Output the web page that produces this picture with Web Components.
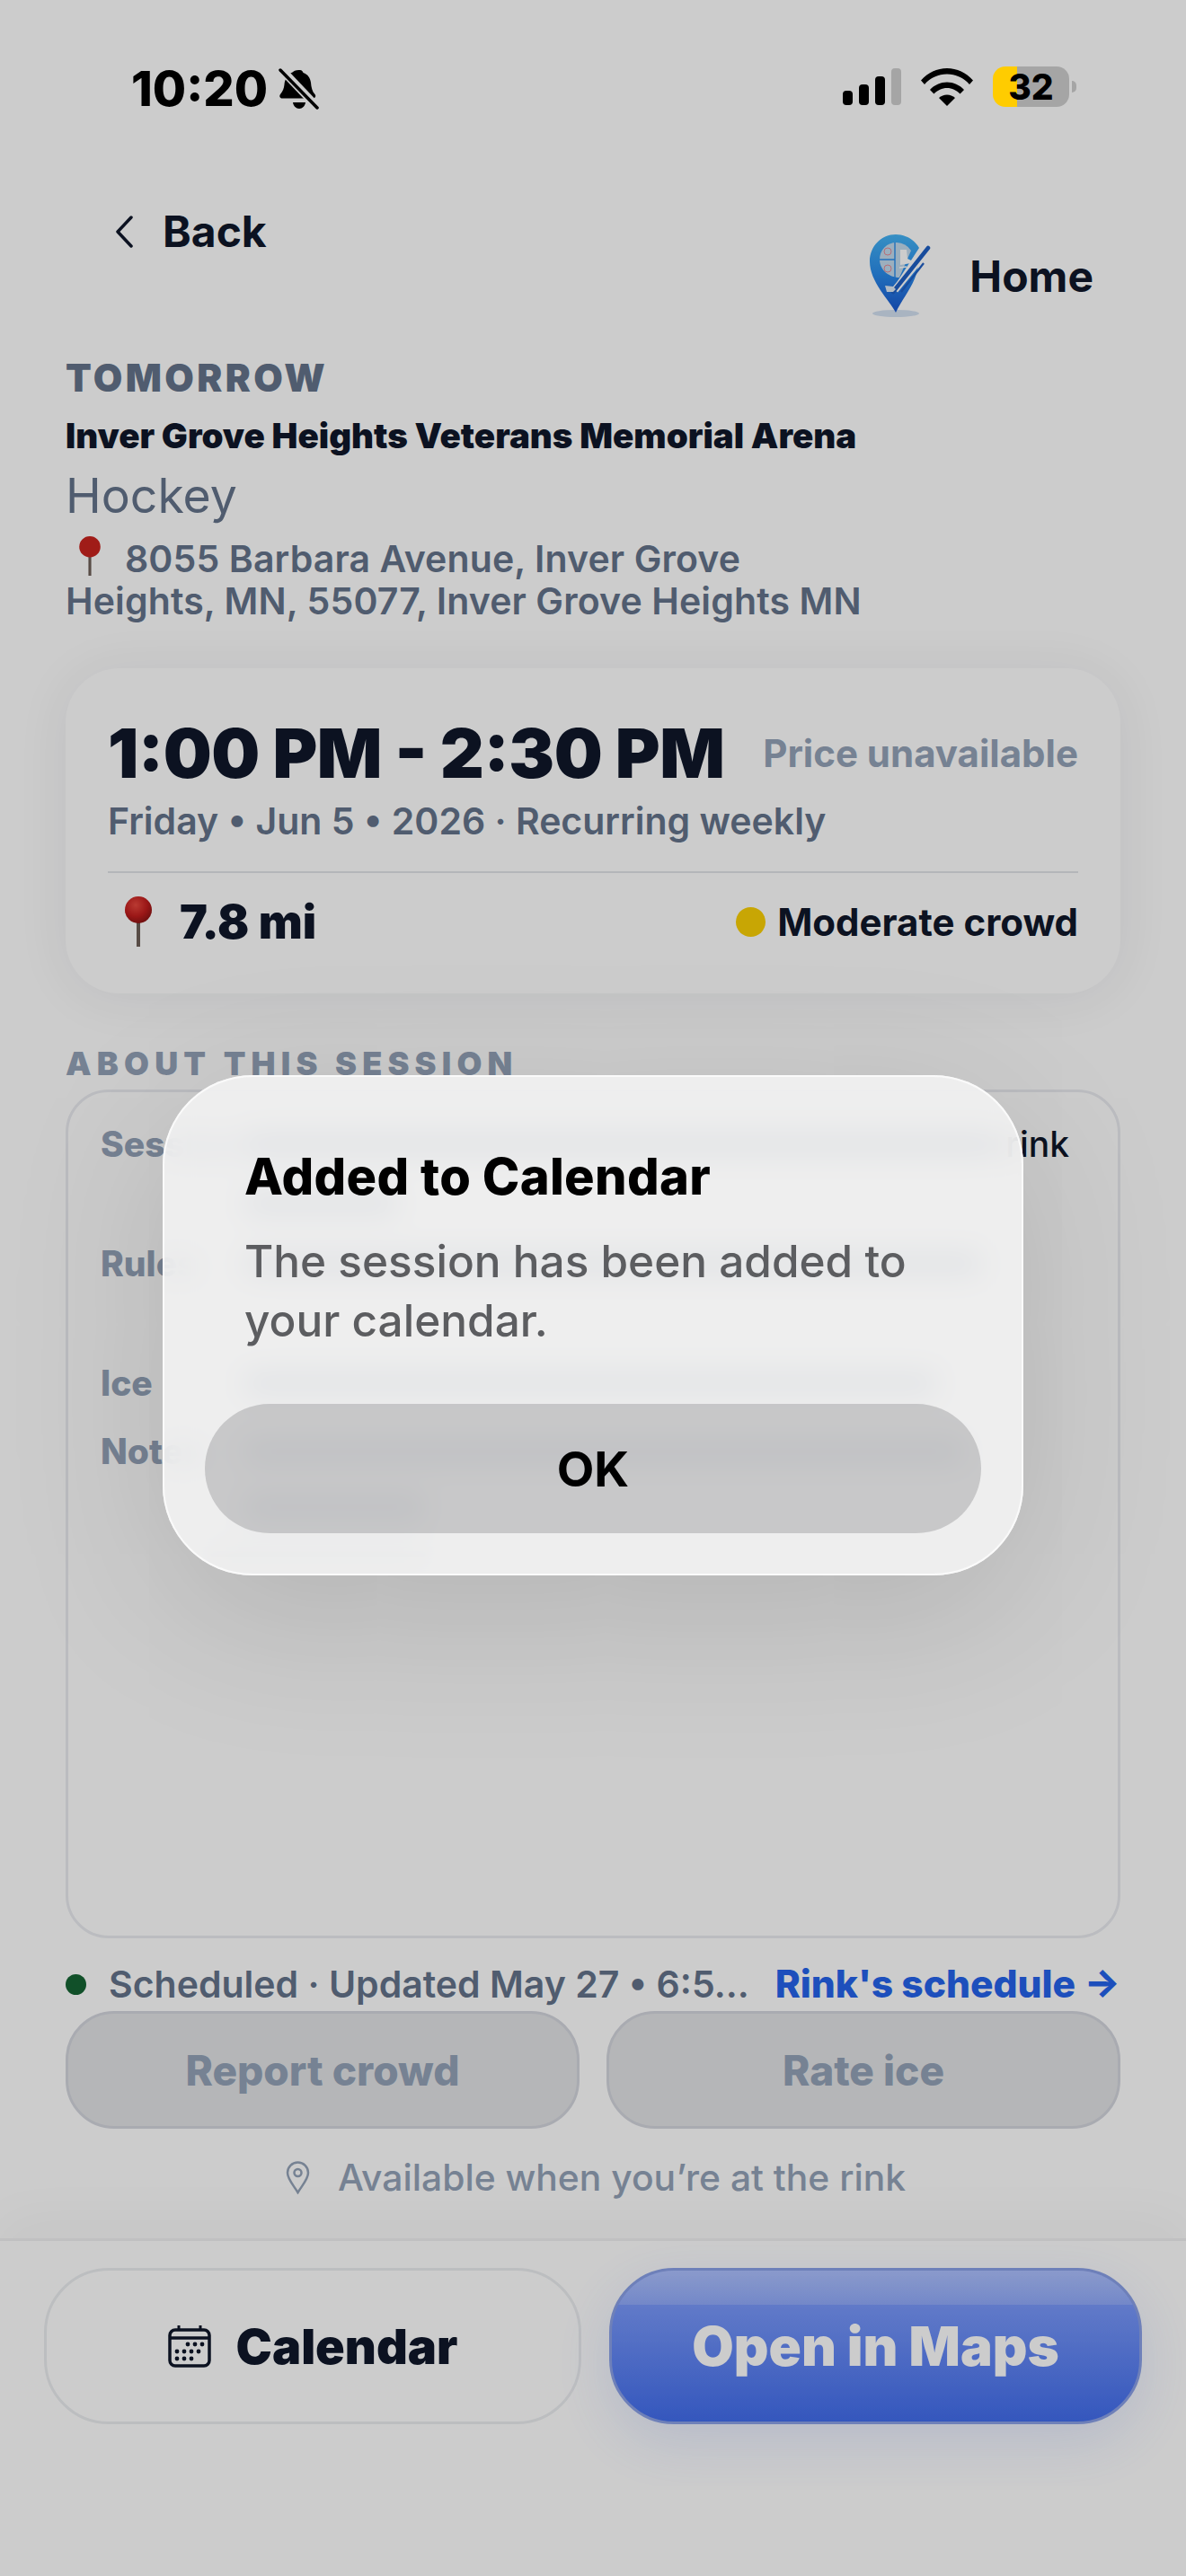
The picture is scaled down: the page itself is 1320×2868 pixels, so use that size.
<!DOCTYPE html>
<html lang="en">
<head>
<meta charset="utf-8">
<title>Session</title>
<style>
  html, body { margin: 0; padding: 0; background: #fff; }
  body { font-family: "Inter", "Liberation Sans", sans-serif; color: #0f172a; }
</style>
</head>
<body>
<app-screen>
  <status-bar slot="status"></status-bar>
  <top-nav></top-nav>
  <session-head></session-head>
  <time-card></time-card>
  <about-panel></about-panel>
  <schedule-line></schedule-line>
  <rink-actions></rink-actions>
  <bottom-bar slot="bottom"></bottom-bar>
  <alert-dialog slot="overlay"
    title="Added to Calendar"
    message="The session has been added to your calendar."
    button-text="OK"></alert-dialog>
</app-screen>

<script>
(function() {
  const PIN = `
    <svg viewBox="0 0 38 56" width="38" height="56" aria-hidden="true">
      <defs>
        <radialGradient id="ball" cx="40%" cy="32%" r="70%">
          <stop offset="0" stop-color="#e8493f"/>
          <stop offset=".6" stop-color="#c21d1d"/>
          <stop offset="1" stop-color="#8c1414"/>
        </radialGradient>
      </defs>
      <rect x="17" y="26" width="4" height="30" fill="#6f5f58"/>
      <circle cx="19" cy="15" r="15" fill="url(#ball)"/>
    </svg>`;

  function component(name, markup, setup) {
    const template = document.createElement('template');
    template.innerHTML = markup;
    class Element extends HTMLElement {
      constructor() {
        super();
        this.attachShadow({ mode: 'open' });
        this.shadowRoot.appendChild(template.content.cloneNode(true));
      }
      connectedCallback() {
        if (setup) setup(this, this.shadowRoot);
      }
    }
    window.customElements.define(name, Element);
  }

  component('app-screen', `
    <style>
      :host { display: block; position: relative; width: 1320px; height: 2868px; overflow: hidden; background: #fff; }
      .page { display: flex; flex-direction: column; height: 2868px; box-sizing: border-box; padding: 0 73px; }
      .scrim { position: absolute; inset: 0; background: rgba(0,0,0,.2); z-index: 2; }
      .status { position: absolute; top: 0; left: 0; right: 0; z-index: 3; }
      .bottom { position: absolute; left: 0; right: 0; bottom: 0; }
      .overlay { position: absolute; inset: 0; z-index: 4; display: flex; align-items: flex-start; justify-content: center; padding-top: 1197px; box-sizing: border-box; }
    </style>
    <div class="page"><slot></slot></div>
    <div class="bottom"><slot name="bottom"></slot></div>
    <div class="scrim"></div>
    <div class="status"><slot name="status"></slot></div>
    <div class="overlay"><slot name="overlay"></slot></div>
  `);

  component('status-bar', `
    <style>
      :host { display: flex; justify-content: space-between; align-items: flex-start; height: 190px; box-sizing: border-box; padding: 66px 122px 0 146px; color: #000; }
      .left { display: flex; align-items: center; gap: 12px; }
      .time { font-size: 54px; font-weight: 800; line-height: 66px; font-feature-settings: "case"; }
      .right { display: flex; align-items: center; gap: 22px; padding-top: 8px; }
      .battery { display: flex; align-items: center; gap: 3px; }
      .cell { width: 85px; height: 45px; border-radius: 14px; background: linear-gradient(90deg, #ffcc00 0 27px, #a5a5a5 27px); display: flex; align-items: center; justify-content: center; font-size: 39px; font-weight: 800; line-height: 45px; }
      .cap { width: 5px; height: 13px; background: #a5a5a5; border-radius: 0 5px 5px 0; }
    </style>
    <div class="left">
      <span class="time">10:20</span>
      <svg width="46" height="46" viewBox="0 0 46 46" aria-hidden="true">
        <path d="M24 2c2 0 3 1.500 3.500 3 5 1.500 8 6 8.500 11 .4 5 1.500 10 4.500 13 1.500 2 .5 4-2 4.500H4c-2.500 0-3.500-2.500-2-4.500 3-3.500 4-7 4.500-11 .4-5 3-11 9-13.500C16.500 3 20 1.500 24 2z" fill="#000"/>
        <path d="M16 38h14c-.5 4-3.500 7-7 7s-6.500-3-7-7z" fill="#000"/>
        <path d="M3 1l40 42" stroke="#ccc" stroke-width="9" fill="none"/>
        <path d="M2 2l41 42" stroke="#000" stroke-width="3.500" stroke-linecap="round" fill="none"/>
      </svg>
    </div>
    <div class="right">
      <svg width="65" height="41" viewBox="0 0 65 41" aria-hidden="true">
        <rect x="0" y="25" width="11" height="16" rx="4" fill="#000"/>
        <rect x="18" y="18" width="11" height="23" rx="4" fill="#000"/>
        <rect x="36" y="9" width="11" height="32" rx="4" fill="#000"/>
        <rect x="54" y="0" width="11" height="41" rx="4" fill="#a5a5a5"/>
      </svg>
      <svg width="58" height="43" viewBox="0 0 58 43" aria-hidden="true">
        <path d="M0 14.500C7.500 6 18 1 29 1s21.500 5 29 13.500l-4 4.500C47.500 11.500 38.500 7.500 29 7.500S10.500 11.500 4 19z" fill="#000"/>
        <path d="M10 25c5-5.500 12-8.500 19-8.500s14 3 19 8.500l-4.500 4.500C39.500 25.500 34.500 23 29 23s-10.500 2.500-14.500 6.500z" fill="#000"/>
        <path d="M20 34c2.500-2 5.500-3.500 9-3.500s6.500 1.500 9 3.500l-9 9z" fill="#000"/>
      </svg>
      <div class="battery"><div class="cell">32</div><div class="cap"></div></div>
    </div>
  `);

  component('top-nav', `
    <style>
      :host { display: flex; justify-content: space-between; align-items: flex-start; height: 168px; margin: 228px 30px 0 55px; color: #0f172a; }
      .back { display: flex; align-items: center; gap: 33px; font-size: 48px; font-weight: 700; line-height: 60px; }
      .home { display: flex; align-items: center; gap: 43px; font-size: 48px; font-weight: 700; margin-top: 32px; }
    </style>
    <div class="back">
      <svg width="20" height="36" viewBox="0 0 20 36" aria-hidden="true"><path d="M18 2L3 18l15 16" stroke="#0f172a" stroke-width="3.500" stroke-linecap="round" stroke-linejoin="round" fill="none"/></svg>
      <span>Back</span>
    </div>
    <div class="home">
      <svg width="68" height="94" viewBox="19 9 68 94" aria-hidden="true">
        <defs>
          <linearGradient id="logo" x1="0" y1="0" x2="0" y2="1">
            <stop offset="0" stop-color="#45b4f5"/>
            <stop offset=".5" stop-color="#2a8ceb"/>
            <stop offset="1" stop-color="#1a57cf"/>
          </linearGradient>
        </defs>
        <ellipse cx="48" cy="98" rx="26" ry="4" fill="#d4e1f2"/>
        <path d="M48 97C41 83 19 63 19 40 19 23 32 10 48 10c10 0 20 5 26 15L50 62l23-18c-2 20-17 36-25 53z" fill="url(#logo)"/>
        <path d="M49 19a20 20 0 0 1 16 9L52 58c-12 0-22-9-22-20s8-19 19-19z" fill="#c4dbee"/>
        <path d="M47 19v39M30 38h17" stroke="#2a8ceb" stroke-width="1.400" fill="none"/>
        <circle cx="39" cy="29" r="4" fill="none" stroke="#e58a95" stroke-width="1"/>
        <circle cx="39" cy="48" r="4" fill="none" stroke="#e58a95" stroke-width="1"/>
        <path d="M53 27h7l1 10 4 2v3l-12 2z" fill="#fff"/>
        <path d="M52 47l8-1" stroke="#fff" stroke-width="1.500"/>
        <path d="M47 72L85 25" stroke="#fff" stroke-width="8" fill="none"/>
        <path d="M45 74L84 25" stroke="#1f5fc4" stroke-width="4.500" stroke-linecap="round" fill="none"/>
        <path d="M36 67l9 1 3 3-3 3H38z" fill="#dfeaf5"/>
        <path d="M54 74L79 42" stroke="#1f5fc4" stroke-width="2.200" fill="none"/>
      </svg>
      <span>Home</span>
    </div>
  `);

  component('session-head', `
    <style>
      :host { display: block; }
      .day { font-size: 42px; font-weight: 900; letter-spacing: 3.400px; line-height: 50px; color: #64748b; }
      .venue { font-size: 38.500px; font-weight: 900; line-height: 44px; color: #0f172a; margin-top: 17px; }
      .sport { font-size: 53.500px; font-weight: 400; line-height: 64px; color: #64748b; margin-top: 13px; }
      .addr { font-size: 41px; font-weight: 600; letter-spacing: .12px; line-height: 47px; color: #64748b; margin-top: 13px; white-space: nowrap; }
      .addr svg { vertical-align: -4px; margin: 0 24px 0 12px; }
    </style>
    <div class="day">TOMORROW</div>
    <div class="venue">Inver Grove Heights Veterans Memorial Arena</div>
    <div class="sport">Hockey</div>
    <div class="addr"><svg viewBox="0 0 38 56" width="30" height="44" aria-hidden="true"><rect x="17" y="26" width="4" height="30" fill="#6f5f58"/><circle cx="19" cy="15" r="15" fill="#c9231f"/></svg>8055 Barbara Avenue, Inver Grove<br>Heights, MN, 55077, Inver Grove Heights MN</div>
  `);

  component('time-card', `
    <style>
      :host { display: block; margin-top: 51px; height: 362px; box-sizing: border-box; padding: 48px 47px 0; background: #fff; border-radius: 60px; box-shadow: 0 4px 60px rgba(15,23,42,.07); }
      .top { display: flex; justify-content: space-between; align-items: center; }
      .time { font-size: 76px; font-weight: 900; line-height: 92px; letter-spacing: -.5px; color: #0f172a; font-feature-settings: "case"; }
      .price { font-size: 42px; font-weight: 700; color: #94a3b8; }
      .date { font-size: 41px; font-weight: 600; line-height: 50px; margin-top: 5px; color: #64748b; }
      hr { height: 2px; border: 0; background: #e2e4e8; margin: 31px 0 0; }
      .meta { display: flex; justify-content: space-between; align-items: center; height: 108px; }
      .dist { display: flex; align-items: center; gap: 27px; padding-left: 15px; font-size: 52px; font-weight: 900; color: #0f172a; }
      .crowd { display: flex; align-items: center; gap: 13px; font-size: 42px; font-weight: 700; color: #0f172a; }
      .dot { width: 33px; height: 33px; border-radius: 50%; background: #fbd005; }
    </style>
    <div class="top"><span class="time">1:00 PM - 2:30 PM</span><span class="price">Price unavailable</span></div>
    <div class="date">Friday • Jun 5 • 2026 · Recurring weekly</div>
    <hr>
    <div class="meta">
      <span class="dist">${PIN}<span>7.8 mi</span></span>
      <span class="crowd"><span class="dot"></span>Moderate crowd</span>
    </div>
  `);

  component('about-panel', `
    <style>
      :host { display: block; margin-top: 56px; }
      h2 { margin: 0; font-size: 36px; font-weight: 900; letter-spacing: 6.200px; line-height: 44px; color: #94a3b8; }
      .box { margin-top: 7px; height: 945px; box-sizing: border-box; border: 3px solid #eaecf0; border-radius: 48px; padding: 33px 54px 0 36px; font-size: 39px; line-height: 50px; }
      .row { display: grid; grid-template-columns: 160px 1fr; }
      dt { font-weight: 800; color: #94a3b8; margin: 0; }
      dd { margin: 0; font-weight: 500; color: #0f172a; }
      dl { margin: 0; }
      .line { display: flex; justify-content: flex-end; align-items: center; height: 50px; gap: 8px; }
      .bar { display: block; height: 26px; background: #94a3b8; border-radius: 6px; }
    </style>
    <h2>ABOUT THIS SESSION</h2>
    <div class="box">
      <dl>
        <div class="row" style="height:133px"><dt>Session</dt><dd>
          <div class="line"><span class="bar" style="flex:1"></span><span>rink</span></div>
          <div class="line" style="margin-top:16px;justify-content:flex-start"><span class="bar" style="width:170px"></span></div>
        </dd></div>
        <div class="row" style="height:133px"><dt>Rules</dt><dd>
          <div class="line" style="justify-content:flex-start"><span class="bar" style="width:820px"></span></div>
        </dd></div>
        <div class="row" style="height:76px"><dt>Ice</dt><dd>
          <div class="line" style="justify-content:flex-start"><span class="bar" style="width:770px"></span></div>
        </dd></div>
        <div class="row"><dt>Notes</dt><dd>
          <div class="line" style="justify-content:flex-start"><span class="bar" style="width:800px"></span></div>
          <div class="line" style="margin-top:12px;justify-content:flex-start"><span class="bar" style="width:200px"></span></div>
        </dd></div>
      </dl>
      <div class="bar" style="width:240px;height:6px;margin:24px 0 0 122px"></div>
    </div>
  `);

  component('schedule-line', `
    <style>
      :host { display: flex; justify-content: space-between; align-items: center; margin-top: 27px; height: 48px; font-size: 41px; line-height: 48px; white-space: nowrap; font-feature-settings: "case"; }
      .state { display: flex; align-items: center; gap: 25px; font-weight: 600; color: #64748b; }
      .dot { width: 23px; height: 23px; border-radius: 50%; background: #166534; }
      a { font-weight: 800; font-size: 42.500px; color: #2563eb; }
    </style>
    <span class="state"><span class="dot"></span>Scheduled · Updated May 27 • 6:5...</span>
    <a>Rink's schedule →</a>
  `);

  component('rink-actions', `
    <style>
      :host { display: block; margin-top: 6px; }
      .row { display: grid; grid-template-columns: 1fr 1fr; gap: 30px; }
      .btn { height: 131px; box-sizing: border-box; border: 3px solid #d4d6de; border-radius: 54px; background: #e3e4e6; color: #94a3b8; display: flex; align-items: center; justify-content: center; font-size: 46px; font-weight: 800; }
      .hint { display: flex; align-items: center; justify-content: center; gap: 31px; margin-top: 30px; padding-left: 6px; font-size: 40.800px; font-weight: 500; line-height: 48px; color: #94a3b8; }
    </style>
    <div class="row"><div class="btn">Report crowd</div><div class="btn">Rate ice</div></div>
    <div class="hint">
      <svg width="27" height="37" viewBox="0 0 27 37" aria-hidden="true"><path d="M13.500 35C8 26 2 20 2 13a11.500 11.500 0 0 1 23 0c0 7-6 13-11.500 22z" fill="none" stroke="#94a3b8" stroke-width="2.500"/><circle cx="13.500" cy="13" r="4" fill="none" stroke="#94a3b8" stroke-width="2.500"/></svg>
      <span>Available when you’re at the rink</span>
    </div>
  `);

  component('bottom-bar', `
    <style>
      :host { display: block; height: 376px; box-sizing: border-box; border-top: 3px solid #f0f0f2; background: #fff; box-shadow: 0 -20px 60px rgba(15,23,42,.03); }
      .clip { height: 273px; overflow: hidden; box-sizing: border-box; padding: 30px 49px 0; }
      .row { display: grid; grid-template-columns: 598px 593px; gap: 31px; }
      .btn { height: 174px; box-sizing: border-box; border-radius: 72px; display: flex; align-items: center; justify-content: center; font-size: 54px; font-weight: 900; }
      .cal { gap: 28px; border: 3px solid #eceef1; color: #0f172a; }
      .maps { position: relative; overflow: hidden; border: 3px solid #8aa0e8; color: #fff; font-size: 60px; background: linear-gradient(#8aa6ff, #426ded); }
      .glow { box-shadow: 0 20px 60px rgba(66,109,237,.14); border-radius: 72px; }
      .maps::before { content: ''; position: absolute; left: 0; right: 0; top: 0; height: 38px; background: linear-gradient(rgba(255,255,255,.3), rgba(255,255,255,.17)); }
      .maps span { position: relative; }
    </style>
    <div class="clip">
      <div class="row">
        <div class="btn cal">
          <svg width="48" height="48" viewBox="0 0 48 48" aria-hidden="true">
            <rect x="2" y="6" width="44" height="40" rx="6" fill="none" stroke="#0f172a" stroke-width="3.500"/>
            <path d="M2 15h44" stroke="#0f172a" stroke-width="3.500"/>
            <path d="M12 1v6M36 1v6" stroke="#0f172a" stroke-width="3"/>
            <g fill="#0f172a">
              <circle cx="22" cy="22" r="2.400"/><circle cx="30" cy="22" r="2.400"/><circle cx="38" cy="22" r="2.400"/>
              <circle cx="10" cy="30" r="2.400"/><circle cx="18" cy="30" r="2.400"/><circle cx="26" cy="30" r="2.400"/><circle cx="34" cy="30" r="2.400"/>
              <circle cx="10" cy="38" r="2.400"/><circle cx="18" cy="38" r="2.400"/><circle cx="26" cy="38" r="2.400"/>
            </g>
          </svg>
          <span>Calendar</span>
        </div>
        <div class="glow"><div class="btn maps"><span>Open in Maps</span></div></div>
      </div>
    </div>
  `);

  component('alert-dialog', `
    <style>
      :host { display: block; width: 958px; height: 557px; box-sizing: border-box; padding: 0; border-radius: 100px; background: rgba(243,243,243,.86); -webkit-backdrop-filter: blur(16px); backdrop-filter: blur(16px); box-shadow: 0 0 0 2px #fafafa inset, 0 40px 180px rgba(0,0,0,.13); color: #000; }
      .copy { padding: 78px 91px 0; }
      h1 { margin: 0; font-size: 56px; font-weight: 800; line-height: 70px; letter-spacing: .3px; }
      p { margin: 26px 0 0; font-size: 49.500px; font-weight: 500; line-height: 66px; color: #5c5d60; }
      button { display: block; width: 864px; height: 144px; margin: 60px auto 0; border: 0; border-radius: 72px; background: rgba(100,102,104,.28); color: #000; font: 700 54px "Inter", sans-serif; }
    </style>
    <div class="copy">
      <h1 id="title"></h1>
      <p id="message"></p>
    </div>
    <button id="ok"></button>
  `, (el, root) => {
    root.querySelector('#title').innerText = el.getAttribute('title');
    root.querySelector('#message').innerText = el.getAttribute('message');
    root.querySelector('#ok').innerText = el.getAttribute('button-text');
    el.removeAttribute('title');
  });
})();
</script>
</body>
</html>
